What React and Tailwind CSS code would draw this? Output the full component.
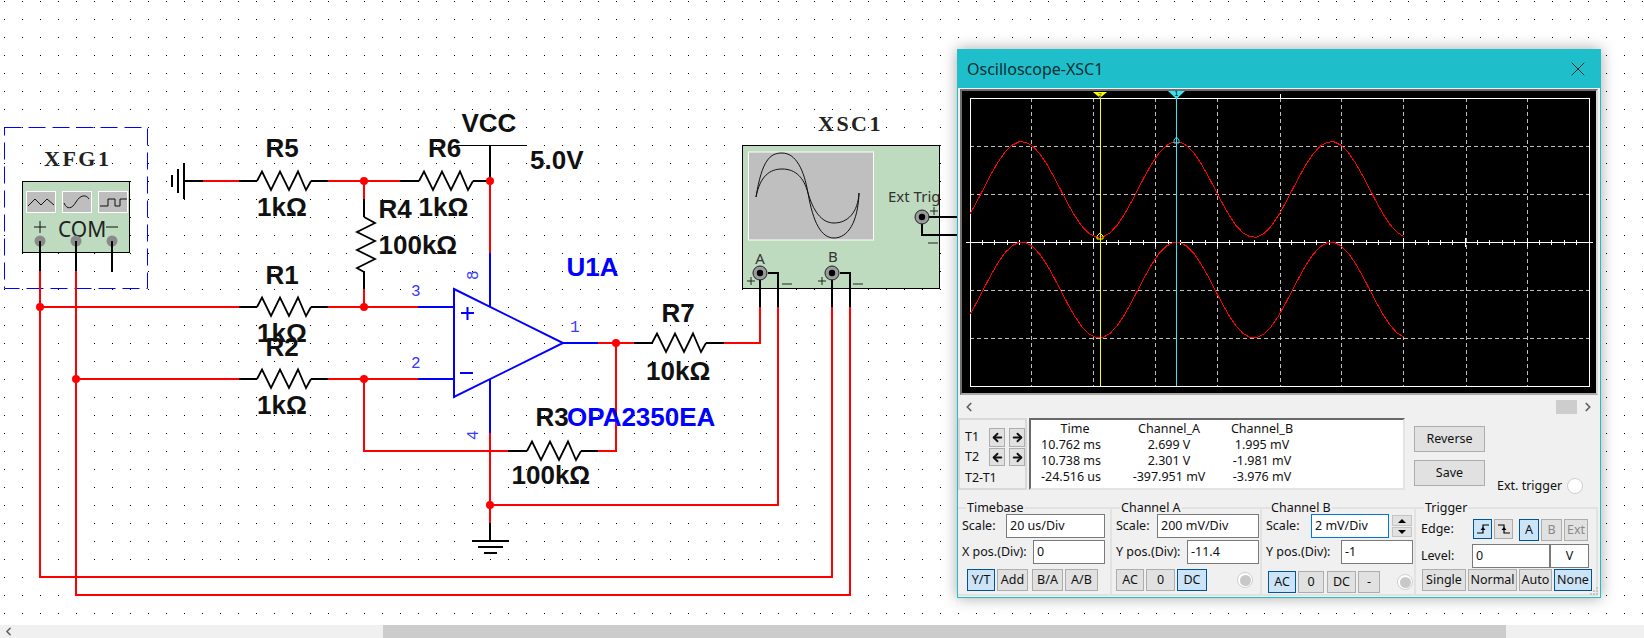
import React from "react";
import { ArrowLeft, ArrowRight, ChevronLeft, ChevronRight, X } from "lucide-react";

const redWires = [
  "203,181 239,181",
  "328,181 400,181",
  "490,181 490,253",
  "364,181 364,199",
  "364,289 364,307",
  "40,271 40,577 832,577 832,307",
  "76,271 76,595 850,595 850,307",
  "40,307 239,307",
  "328,307 418,307",
  "76,379 239,379",
  "328,379 418,379",
  "364,379 364,451 508,451",
  "598,343 634,343",
  "616,343 616,451 598,451",
  "724,343 760,343 760,307",
  "778,307 778,505 490,505",
  "490,433 490,523",
];

const blackWires = [
  "184,181 203,181",
  "239,181 257,181",
  "311,181 328,181",
  "400,181 419,181",
  "473,181 490,181 490,145",
  "364,199 364,217",
  "364,272 364,289",
  "239,307 257,307",
  "311,307 328,307",
  "239,379 257,379",
  "311,379 328,379",
  "634,343 652,343",
  "706,343 724,343",
  "508,451 527,451",
  "581,451 598,451",
  "490,523 490,541",
  "40,241 40,271",
  "76,241 76,271",
  "112,241 112,272",
  "760,273 760,307",
  "768,273 778,273 778,307",
  "832,273 832,307",
  "840,273 850,273 850,307",
  "922,217 962,217",
  "922,217 922,235 962,235",
];

const blueWires = [
  "418,307 454,307",
  "418,379 454,379",
  "490,253 490,307",
  "490,380 490,433",
  "563,343 598,343",
];

const junctions = [
  [40, 307],
  [76, 379],
  [364, 181],
  [364, 307],
  [364, 379],
  [490, 181],
  [490, 505],
  [616, 343],
];

const boldLabels = [
  ["R5", 265.5, 157],
  ["1kΩ", 257, 216],
  ["R6", 428, 157],
  ["1kΩ", 418.5, 216],
  ["R4", 378.5, 218],
  ["100kΩ", 378.5, 254],
  ["R1", 265.5, 284],
  ["1kΩ", 257, 342],
  ["R2", 265.5, 356],
  ["1kΩ", 257, 414],
  ["VCC", 461.5, 132],
  ["5.0V", 530, 169],
  ["R7", 661.5, 322],
  ["10kΩ", 646, 380],
  ["R3", 535.5, 426],
  ["100kΩ", 511.5, 484],
];

function Resistor({ x, y }) {
  const pts = [
    [0, 0],
    [5, -9.5],
    [14, 9],
    [23, -9.5],
    [32, 9],
    [41, -9.5],
    [49, 9],
    [54, 0],
  ];
  return (
    <polyline
      points={pts.map((p) => `${x + p[0]},${y + p[1]}`).join(" ")}
      fill="none"
      stroke="#000"
      strokeWidth="1.8"
    />
  );
}

function Connector({ x, y }) {
  return (
    <g>
      <circle cx={x} cy={y} r="7" fill="#9a9a9a" stroke="#222" strokeWidth="1" />
      <circle cx={x} cy={y} r="3.2" fill="#000" />
    </g>
  );
}

function Schematic() {
  return (
    <svg className="absolute inset-0" width="1644" height="625" viewBox="0 0 1644 625">
      <defs>
        <pattern id="dots" x="0" y="0" width="18" height="18" patternUnits="userSpaceOnUse">
          <rect x="4" y="1" width="1" height="1" fill="#000" />
        </pattern>
      </defs>
      <rect width="1644" height="625" fill="url(#dots)" />

      {/* function generator */}
      <rect x="4.5" y="127.5" width="143" height="161" fill="none" stroke="#0000ff" strokeWidth="1" strokeDasharray="17 7" />
      <rect x="22.5" y="181.5" width="107" height="71" fill="#bedbbf" stroke="#000" strokeWidth="1" />
      <rect x="26.5" y="191.5" width="29" height="21" fill="#bebebe" stroke="#fff" />
      <rect x="62.5" y="191.5" width="29" height="21" fill="#bebebe" stroke="#fff" />
      <rect x="98.5" y="191.5" width="29" height="21" fill="#bebebe" stroke="#fff" />
      <polyline points="28,206 35,199 41,205 47,199 54,205" fill="none" stroke="#111" />
      <path d="M64 203 C67 210 72 209 76 202 C80 195 86 194 89 199" fill="none" stroke="#111" />
      <polyline points="100,206 108,206 108,199 115,199 115,206 120,206 120,199 127,199" fill="none" stroke="#111" />
      <path d="M40 221 V233 M34 227 H46 M106 227 H118" stroke="#111" strokeWidth="1" />
      <text x="58" y="237" fontSize="21" fill="#222" className="font-['Noto_Sans',sans-serif]">COM</text>
      <text x="44" y="166" fontSize="22" fontWeight="700" letterSpacing="2.5" fill="#222" className="font-['Liberation_Serif',serif]">XFG1</text>

      {/* scope body */}
      <rect x="742.5" y="145.5" width="197" height="143" fill="#bedbbf" stroke="#000" strokeWidth="1" />
      <rect x="748.5" y="152" width="125" height="88" fill="#bfbfbf" stroke="#fff" />
      <path d="M756 197 C762 160 770 153 782 153 C796 153 804 170 808 193 C813 222 821 238 834 238 C848 238 858 222 859 193" fill="none" stroke="#111" />
      <path d="M756 197 C760 176 770 169 782 169 C796 169 804 178 808 193 C813 210 821 223 834 223 C848 223 858 212 859 193" fill="none" stroke="#111" />
      <text x="888" y="202" fontSize="15" fill="#333" className="font-['Noto_Sans',sans-serif]">Ext Trig</text>
      <text x="760" y="264" fontSize="15" fill="#333" textAnchor="middle" className="font-['Noto_Sans',sans-serif]">A</text>
      <text x="833" y="262" fontSize="15" fill="#333" textAnchor="middle" className="font-['Noto_Sans',sans-serif]">B</text>
      <path d="M747 281 H755 M751 277 V285 M782 284 H792 M818 281 H826 M822 277 V285 M853 284 H863 M930 211 H938 M934 207 V215 M928 243 H938" stroke="#222" strokeWidth="1" />
      <text x="818" y="131" fontSize="22" fontWeight="700" letterSpacing="2.5" fill="#222" className="font-['Liberation_Serif',serif]">XSC1</text>

      {/* wires */}
      <g fill="none" stroke="#000" strokeWidth="2" shapeRendering="crispEdges">
        {blackWires.map((w) => (
          <polyline key={w} points={w} />
        ))}
      </g>
      <g fill="none" stroke="#ff0000" strokeWidth="2" shapeRendering="crispEdges">
        {redWires.map((w) => (
          <polyline key={w} points={w} />
        ))}
      </g>
      <g fill="none" stroke="#0000ff" strokeWidth="2" shapeRendering="crispEdges">
        {blueWires.map((w) => (
          <polyline key={w} points={w} />
        ))}
      </g>
      {junctions.map(([x, y]) => (
        <circle key={`${x}-${y}`} cx={x} cy={y} r="4" fill="#ff0000" />
      ))}

      <Resistor x={257} y={181} />
      <Resistor x={419} y={181} />
      <Resistor x={257} y={307} />
      <Resistor x={257} y={379} />
      <Resistor x={652} y={343} />
      <Resistor x={527} y={451} />
      <polyline points="364,217 375,223 357,232 375,241 357,250 375,259 357,268 364,272" fill="none" stroke="#000" strokeWidth="1.8" />

      {/* grounds and rail */}
      <path d="M172 175 V187 M178 169 V193 M184 163 V199" stroke="#000" strokeWidth="2" shapeRendering="crispEdges" />
      <path d="M472 541 H509 M478 547 H503 M484 553 H497" stroke="#000" strokeWidth="2" shapeRendering="crispEdges" />
      <path d="M455 145.5 H527" stroke="#000" strokeWidth="1" shapeRendering="crispEdges" />

      {/* op amp */}
      <polygon points="454,289 563,343 454,397" fill="none" stroke="#0000ff" strokeWidth="2" />
      <path d="M461 313 H474 M467.5 307 V320 M460 373 H473" stroke="#0000ff" strokeWidth="2" />

      {/* generator pins */}
      {[40, 76, 112].map((x) => (
        <g key={x}>
          <circle cx={x} cy="241" r="5.5" fill="#8a8a8a" />
          <line x1={x} y1="241" x2={x} y2="252" stroke="#000" strokeWidth="2" />
        </g>
      ))}
      <Connector x={760} y={273} />
      <Connector x={832} y={273} />
      <Connector x={922} y={217} />

      {boldLabels.map(([t, x, y]) => (
        <text key={t + x + y} x={x} y={y} fontSize="26" fontWeight="700" fill="#111" className="font-['Liberation_Sans',sans-serif]">
          {t}
        </text>
      ))}
      <text x="566.5" y="276" fontSize="26" fontWeight="700" fill="#0000ff" className="font-['Liberation_Sans',sans-serif]">U1A</text>
      <text x="567" y="426" fontSize="26" fontWeight="700" fill="#0000ff" className="font-['Liberation_Sans',sans-serif]">OPA2350EA</text>

      <g fontSize="16" fill="#3a3aff" className="font-['Liberation_Mono',monospace]">
        <text x="411" y="296">3</text>
        <text x="411" y="368">2</text>
        <text x="570" y="332">1</text>
        <text transform="translate(478 280) rotate(-90)">8</text>
        <text transform="translate(478 440) rotate(-90)">4</text>
      </g>
    </svg>
  );
}

function curve(cy) {
  const pts = [];
  for (let x = 970; x <= 1409; x += 7) {
    const y = cy - 48 * Math.cos((2 * Math.PI * (x - 1176.5)) / 154.7);
    pts.push(`${x},${y.toFixed(1)}`);
  }
  return pts.join(" ");
}

function Plot() {
  const vertical = [1031, 1093.5, 1155.5, 1217, 1280, 1341.5, 1403.5, 1466, 1527.5];
  const horizontal = [146, 194, 290, 338];
  const ticks = [];
  for (let i = 0; i <= 50; i++) ticks.push(970 + i * 12.38);
  return (
    <svg width="634" height="302" viewBox="962 91 634 302" className="block">
      <g stroke="#bdbdbd" strokeWidth="1" strokeDasharray="4 3" shapeRendering="crispEdges">
        {vertical.map((x) => (
          <line key={x} x1={x} y1="98" x2={x} y2="386" />
        ))}
        {horizontal.map((y) => (
          <line key={y} x1="970" y1={y} x2="1589" y2={y} />
        ))}
      </g>
      <rect x="970.5" y="98.5" width="619" height="288" fill="none" stroke="#fff" strokeWidth="1" shapeRendering="crispEdges" />
      <line x1="966" y1="242.5" x2="1593" y2="242.5" stroke="#fff" strokeWidth="1" shapeRendering="crispEdges" />
      <g stroke="#fff" strokeWidth="1" shapeRendering="crispEdges">
        {ticks.map((x, i) => (
          <line key={x} x1={x} y1={i % 5 === 0 ? 238 : 240} x2={x} y2={i % 5 === 0 ? 247 : 245} />
        ))}
        <line x1="1280" y1="94" x2="1280" y2="98" />
      </g>
      <polyline points={curve(189.5)} fill="none" stroke="#ff0000" strokeWidth="1" shapeRendering="crispEdges" />
      <polyline points={curve(290)} fill="none" stroke="#ff0000" strokeWidth="1" shapeRendering="crispEdges" />
      <line x1="1100.5" y1="98" x2="1100.5" y2="386" stroke="#ffff00" strokeWidth="1" shapeRendering="crispEdges" />
      <line x1="1176.5" y1="98" x2="1176.5" y2="386" stroke="#33e6f0" strokeWidth="1" shapeRendering="crispEdges" />
      <polygon points="1093,92 1107,92 1100,98" fill="#ffff00" />
      <polygon points="1168,91 1185,91 1176.5,99" fill="#33e6f0" />
      <text x="1176.5" y="96" fontSize="7" textAnchor="middle" fill="#000" className="font-['Liberation_Sans',sans-serif]">1</text>
      <text x="1100" y="97" fontSize="6" textAnchor="middle" fill="#000" className="font-['Liberation_Sans',sans-serif]">2</text>
      <path d="M1176.5 137 L1179 140 V143 H1174 V140 Z" fill="none" stroke="#33e6f0" />
      <path d="M1100 233 L1103 236 V239 H1097 V236 Z" fill="none" stroke="#ffff00" />
    </svg>
  );
}

function Btn({ className, on, dim, children }) {
  const skin = on
    ? "bg-[#cce4f7] border-[#005499]"
    : "bg-[#e1e1e1] border-[#adadad]";
  return (
    <div
      className={`flex items-center justify-center shrink-0 border ${skin} ${
        dim ? "text-[#8a8a8a]" : "text-[#111]"
      } ${className}`}
    >
      {children}
    </div>
  );
}

function Field({ className, focus, center, children }) {
  return (
    <div
      className={`flex items-center shrink-0 h-[24px] bg-white border ${
        focus ? "border-[#0078d7]" : "border-[#7a7a7a]"
      } ${center ? "justify-center" : "pl-[3px]"} ${className}`}
    >
      {children}
    </div>
  );
}

function Radio() {
  return (
    <div className="flex items-center justify-center shrink-0 w-[16px] h-[16px] rounded-full bg-white border border-[#cfcfcf]">
      <div className="w-[11px] h-[11px] rounded-full bg-[#c8c8c8]" />
    </div>
  );
}

function Group({ title, className, children }) {
  return (
    <div className="h-[89px] shrink-0 border-y-2 border-r-2 border-[#e2e2e2]">
      <div className="h-0 -mt-px ml-[8px] flex items-center">
        <span className="bg-[#f0f0f0] px-px text-[#111] leading-none">{title}</span>
      </div>
      <div className={className}>{children}</div>
    </div>
  );
}

function EdgeIcon({ falling }) {
  return (
    <svg width="14" height="14" viewBox="0 0 14 14" className={falling ? "-scale-x-100" : ""}>
      <path d="M1 11 H7 V3 H13" fill="none" stroke="#000" strokeWidth="1.2" />
      <path d="M4.5 8 L7 5 L9.5 8 Z" fill="#000" />
    </svg>
  );
}

function Scope() {
  const data = [
    ["Time", "Channel_A", "Channel_B"],
    ["10.762 ms", "2.699 V", "1.995 mV"],
    ["10.738 ms", "2.301 V", "-1.981 mV"],
    ["-24.516 us", "-397.951 mV", "-3.976 mV"],
  ];
  return (
    <div className="absolute left-[957px] top-[49px] w-[644px] h-[549px] flex flex-col border border-[#1fbecb] bg-[#f0f0f0] shadow-[0_0_14px_rgba(0,0,0,0.35)] text-[12.5px] text-[#111] font-['Noto_Sans',sans-serif]">
      <div className="h-[38px] shrink-0 flex items-center justify-between bg-[#1fbecb] pl-[9px] pr-[10px] text-[16px] text-[#0b2e30]">
        <span>Oscilloscope-XSC1</span>
        <X size={24} strokeWidth={1} className="text-[#0b2e30]" />
      </div>

      <div className="mt-px ml-[2px] w-[638px] h-[306px] shrink-0 bg-black border-2 border-t-[#6e6e6e] border-l-[#6e6e6e] border-r-[#d8d8d8] border-b-[#a8a8a8]">
        <Plot />
      </div>

      <div className="h-[23px] shrink-0 flex items-center pl-[4px] pr-[5px]">
        <ChevronLeft size={14} strokeWidth={3} className="text-[#606060]" />
        <div className="ml-auto w-[21px] h-[14px] bg-[#cdcdcd]" />
        <ChevronRight size={14} strokeWidth={3} className="ml-[4px] text-[#606060]" />
      </div>

      <div className="h-[72px] shrink-0 flex">
        <div className="w-[69px] shrink-0 border-2 border-[#d8d8d8] pl-[5px] flex flex-col">
          <div className="h-[22px] mt-[6px] flex items-center">
            <span className="w-[24px]">T1</span>
            <Btn className="w-[16px] h-[19px]"><ArrowLeft size={13} strokeWidth={3.5} /></Btn>
            <Btn className="w-[16px] h-[19px] ml-[4px]"><ArrowRight size={13} strokeWidth={3.5} /></Btn>
          </div>
          <div className="h-[18px] flex items-center">
            <span className="w-[24px]">T2</span>
            <Btn className="w-[16px] h-[18px]"><ArrowLeft size={13} strokeWidth={3.5} /></Btn>
            <Btn className="w-[16px] h-[18px] ml-[4px]"><ArrowRight size={13} strokeWidth={3.5} /></Btn>
          </div>
          <span className="mt-[3px]">T2-T1</span>
        </div>

        <div className="w-[376px] ml-[2px] shrink-0 bg-white border-2 border-t-[#696969] border-l-[#696969] border-r-[#e3e3e3] border-b-[#e3e3e3] pt-[1px]">
          {data.map((row, i) => (
            <div key={row[0]} className="grid grid-cols-[80px_116px_70px] h-[16px] items-center text-center text-[12.5px] leading-none">
              <span className={i === 0 ? "pl-[8px]" : ""}>{row[0]}</span>
              <span>{row[1]}</span>
              <span>{row[2]}</span>
            </div>
          ))}
        </div>

        <div className="ml-[9px] pt-[8px] flex flex-col gap-[8px] shrink-0">
          <Btn className="w-[71px] h-[26px]">Reverse</Btn>
          <Btn className="w-[71px] h-[26px]">Save</Btn>
        </div>

        <div className="ml-[12px] pt-[59px] flex items-start gap-[5px] shrink-0">
          <span className="leading-[18px]">Ext. trigger</span>
          <div className="w-[16px] h-[16px] mt-px rounded-full bg-white border border-[#cfcfcf]" />
        </div>
      </div>

      <div className="mt-[17px] flex">
        <Group title="Timebase" className="w-[152px] pl-[4px] pt-[6px]">
          <div className="flex items-center">
            <span className="w-[44px]">Scale:</span>
            <Field className="w-[99px]">20 us/Div</Field>
          </div>
          <div className="flex items-center mt-[2px]">
            <span className="w-[71px]">X pos.(Div):</span>
            <Field className="w-[72px]">0</Field>
          </div>
          <div className="flex ml-[5px] mt-[5px]">
            <Btn on className="w-[28px] h-[22px]">Y/T</Btn>
            <Btn className="w-[31px] h-[22px] ml-[2px]">Add</Btn>
            <Btn className="w-[31px] h-[22px] ml-[4px]">B/A</Btn>
            <Btn className="w-[33px] h-[22px] ml-[2px]">A/B</Btn>
          </div>
        </Group>

        <Group title="Channel A" className="w-[148px] pl-[4px] pt-[6px]">
          <div className="flex items-center">
            <span className="w-[41px]">Scale:</span>
            <Field className="w-[102px]">200 mV/Div</Field>
          </div>
          <div className="flex items-center mt-[2px]">
            <span className="w-[71px]">Y pos.(Div):</span>
            <Field className="w-[72px]">-11.4</Field>
          </div>
          <div className="flex items-center mt-[5px]">
            <Btn className="w-[28px] h-[22px]">AC</Btn>
            <Btn className="w-[29px] h-[22px] ml-[2px]">0</Btn>
            <Btn on className="w-[30px] h-[22px] ml-[2px]">DC</Btn>
            <div className="ml-[30px]"><Radio /></div>
          </div>
        </Group>

        <Group title="Channel B" className="w-[152px] pl-[4px] pt-[6px]">
          <div className="flex items-center">
            <span className="w-[45px]">Scale:</span>
            <Field focus className="w-[78px]">2 mV/Div</Field>
            <div className="ml-[3px] w-[20px] flex flex-col gap-px shrink-0">
              <div className="h-[11px] flex items-center justify-center bg-[#e1e1e1] border border-[#c4c4c4]">
                <div className="w-0 h-0 border-x-[4px] border-x-transparent border-b-[4px] border-b-black" />
              </div>
              <div className="h-[10px] flex items-center justify-center bg-[#e1e1e1] border border-[#c4c4c4]">
                <div className="w-0 h-0 border-x-[4px] border-x-transparent border-t-[4px] border-t-black" />
              </div>
            </div>
          </div>
          <div className="flex items-center mt-[2px]">
            <span className="w-[75px]">Y pos.(Div):</span>
            <Field className="w-[72px]">-1</Field>
          </div>
          <div className="flex items-center ml-[2px] mt-[7px]">
            <Btn on className="w-[28px] h-[22px]">AC</Btn>
            <Btn className="w-[26px] h-[22px] ml-[2px]">0</Btn>
            <Btn className="w-[29px] h-[22px] ml-[3px]">DC</Btn>
            <Btn className="w-[22px] h-[22px] ml-[2px]">-</Btn>
            <div className="ml-[17px]"><Radio /></div>
          </div>
        </Group>

        <Group title="Trigger" className="w-[180px] pl-[5px] pt-[11px]">
          <div className="flex items-start h-[22px]">
            <span className="w-[52px] leading-[20px]">Edge:</span>
            <Btn on className="w-[19px] h-[20px]"><EdgeIcon /></Btn>
            <Btn className="w-[19px] h-[20px] ml-[2px]"><EdgeIcon falling /></Btn>
            <Btn on className="w-[20px] h-[22px] ml-[6px]">A</Btn>
            <Btn dim className="w-[21px] h-[22px] ml-[2px]">B</Btn>
            <Btn dim className="w-[24px] h-[22px] ml-[2px]">Ext</Btn>
          </div>
          <div className="flex items-center mt-[3px]">
            <span className="w-[51px]">Level:</span>
            <Field className="w-[78px]">0</Field>
            <Field center className="w-[39px]">V</Field>
          </div>
          <div className="flex ml-px mt-px">
            <Btn className="w-[44px] h-[22px]">Single</Btn>
            <Btn className="w-[49px] h-[22px] ml-[2px]">Normal</Btn>
            <Btn className="w-[33px] h-[22px] ml-[2px]">Auto</Btn>
            <Btn on className="w-[38px] h-[22px] ml-[2px]">None</Btn>
          </div>
        </Group>
      </div>

      <svg className="absolute right-px bottom-px" width="10" height="10" viewBox="0 0 10 10">
        <path d="M7 1h2v2h-2z M4 4h2v2h-2z M7 4h2v2h-2z M1 7h2v2h-2z M4 7h2v2h-2z M7 7h2v2h-2z" fill="#c4c4c4" />
      </svg>
    </div>
  );
}

export default function App() {
  return (
    <div className="w-[1644px] h-[638px] flex flex-col bg-white overflow-hidden">
      <div className="relative h-[625px] shrink-0">
        <Schematic />
        <Scope />
      </div>
      <div className="h-[13px] flex items-center bg-[#f0f0f0] pl-[2px]">
        <ChevronLeft size={13} strokeWidth={3} className="text-[#606060]" />
        <div className="ml-[368px] w-[1123px] h-full bg-[#cccccc]" />
      </div>
    </div>
  );
}
